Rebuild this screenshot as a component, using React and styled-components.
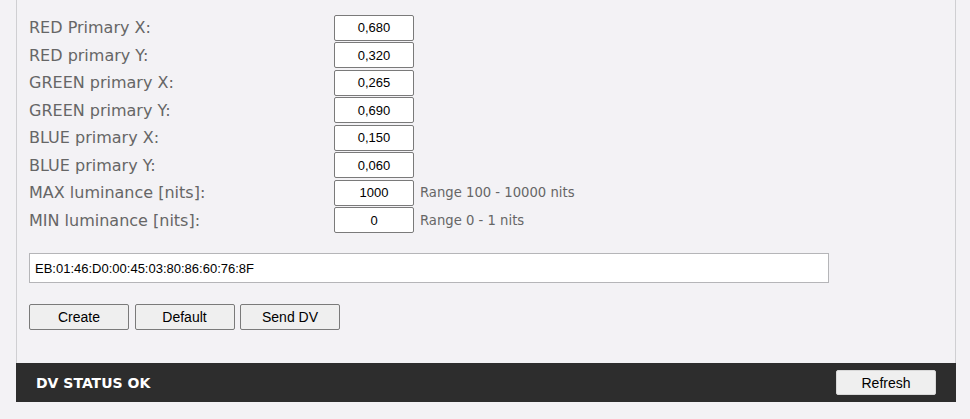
import React from 'react';
import styled, { createGlobalStyle } from 'styled-components';

const GlobalStyle = createGlobalStyle`
    body {
        margin: 0;
        background: #f3f2f5;
        font-family: "DejaVu Sans", Verdana, sans-serif;
    }
`

const primaries = [
    { label: 'RED Primary X:', value: '0,680' },
    { label: 'RED primary Y:', value: '0,320' },
    { label: 'GREEN primary X:', value: '0,265' },
    { label: 'GREEN primary Y:', value: '0,690' },
    { label: 'BLUE primary X:', value: '0,150' },
    { label: 'BLUE primary Y:', value: '0,060' },
    { label: 'MAX luminance [nits]:', value: '1000', hint: 'Range 100 - 10000 nits' },
    { label: 'MIN luminance [nits]:', value: '0', hint: 'Range 0 - 1 nits' },
];

const App = () => (
    <PageStyle>
        <GlobalStyle />
        <PanelStyle>
            <FieldGridStyle>
                {primaries.map(({ label, value, hint }) => (
                    <RowStyle key={label}>
                        <LabelStyle>{label}</LabelStyle>
                        <SmallInputStyle defaultValue={value} />
                        {hint && <HintStyle>{hint}</HintStyle>}
                    </RowStyle>
                ))}
            </FieldGridStyle>
            <DataInputStyle defaultValue="EB:01:46:D0:00:45:03:80:86:60:76:8F" />
            <ButtonRowStyle>
                <ButtonStyle>Create</ButtonStyle>
                <ButtonStyle>Default</ButtonStyle>
                <ButtonStyle>Send DV</ButtonStyle>
            </ButtonRowStyle>
        </PanelStyle>
        <StatusBarStyle>
            <StatusTextStyle>DV STATUS OK</StatusTextStyle>
            <ButtonStyle $light>Refresh</ButtonStyle>
        </StatusBarStyle>
    </PageStyle>
);

export const PageStyle = styled.div`
    width: 940px;
    margin-left: 16px;
`

export const PanelStyle = styled.div`
    border-left: 1px solid #cfcfd2;
    border-right: 1px solid #cfcfd2;
    padding: 14px 12px 33px 12px;
`

export const FieldGridStyle = styled.div`
    display: grid;
    grid-auto-rows: 27.5px;
`

export const RowStyle = styled.div`
    display: flex;
    align-items: center;
`

export const LabelStyle = styled.span`
    width: 305px;
    font-size: 16px;
    color: #666;
`

export const SmallInputStyle = styled.input`
    box-sizing: border-box;
    width: 80px;
    height: 26px;
    border: 1px solid #7a7a7a;
    border-radius: 2px;
    background: #fff;
    text-align: center;
    font-family: "Liberation Sans", Arial, sans-serif;
    font-size: 13px;
    color: #000;
    padding: 0;
`

export const HintStyle = styled.span`
    margin-left: 6px;
    font-size: 13.2px;
    color: #666;
`

export const DataInputStyle = styled.input`
    display: block;
    box-sizing: border-box;
    width: 800px;
    height: 30px;
    margin-top: 19px;
    border: 1px solid #b5b5b8;
    background: #fff;
    padding: 0 5px;
    font-family: "Liberation Sans", Arial, sans-serif;
    font-size: 13px;
    color: #000;
`

export const ButtonRowStyle = styled.div`
    display: flex;
    gap: 5.5px;
    margin-top: 21px;
`

export const ButtonStyle = styled.button`
    box-sizing: border-box;
    width: 100px;
    height: ${({ $light }) => ($light ? '25px' : '26px')};
    border: 1px solid ${({ $light }) => ($light ? '#d8d8d8' : '#7a7a7a')};
    border-radius: 2px;
    background: #efefef;
    font-family: "Liberation Sans", Arial, sans-serif;
    font-size: 14px;
    color: #000;
    padding: 0;
`

export const StatusBarStyle = styled.div`
    display: flex;
    align-items: center;
    justify-content: space-between;
    height: 39px;
    background: #2d2d2d;
    padding: 0 20px;
`

export const StatusTextStyle = styled.span`
    font-size: 14px;
    font-weight: bold;
    color: #fff;
`

export default App;
